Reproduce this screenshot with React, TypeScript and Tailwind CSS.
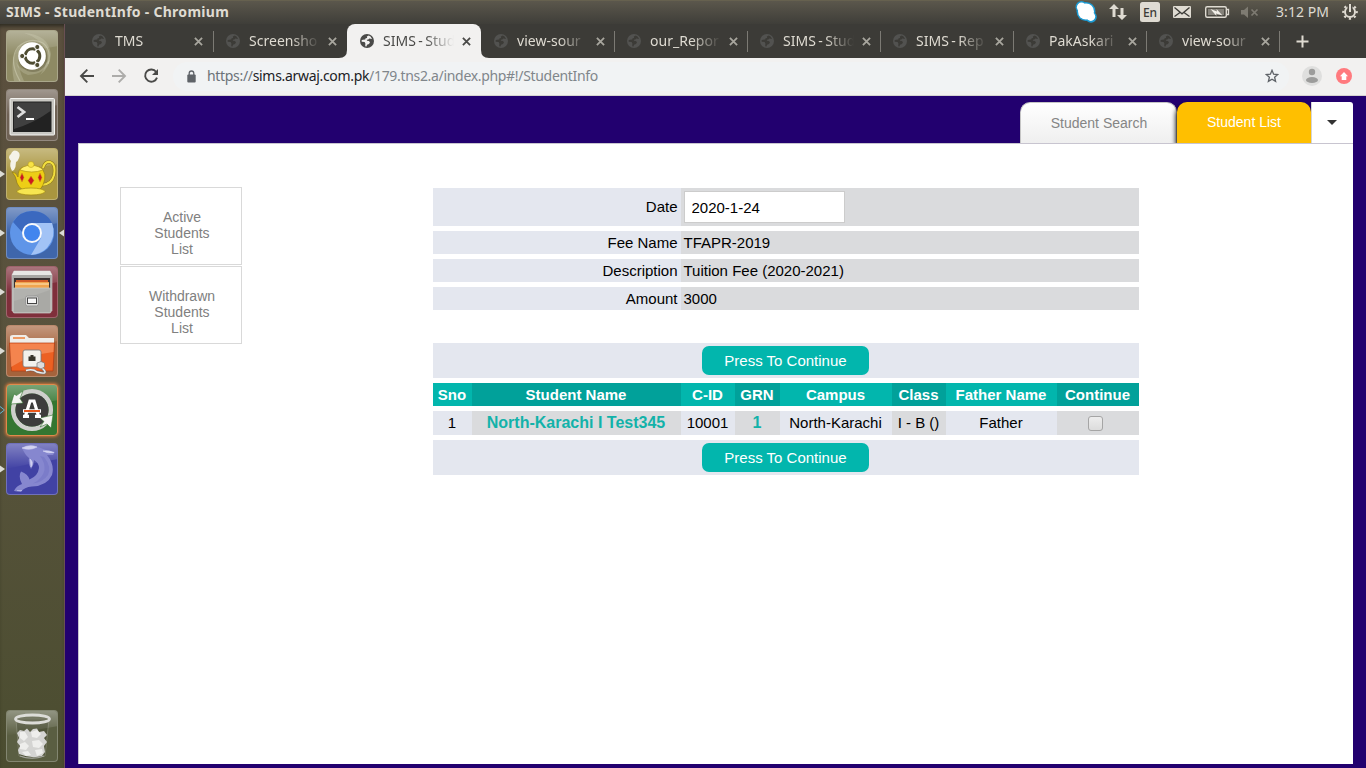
import React from "react";

type TabInfo = { title: string; active?: boolean; width: string; sep?: boolean };

const TABS: TabInfo[] = [
  { title: "TMS", width: "w-[134px]", sep: true },
  { title: "Screensho", width: "w-[134px]" },
  { title: "SIMS - Stud", width: "w-[134px]", active: true },
  { title: "view-sour", width: "w-[133px]", sep: true },
  { title: "our_Repor", width: "w-[133px]", sep: true },
  { title: "SIMS - Stud", width: "w-[133px]", sep: true },
  { title: "SIMS - Rep", width: "w-[133px]", sep: true },
  { title: "PakAskari", width: "w-[133px]", sep: true },
  { title: "view-sour", width: "w-[133px]", sep: true },
];

function Globe({ color, hole }: { color: string; hole: string }) {
  return (
    <svg width="14" height="14" viewBox="0 0 14 14" className="shrink-0">
      <circle cx="7" cy="7" r="7" fill={color} />
      <path
        d="M8.800 1.600 L6.800 2.600 L7.200 3.900 L5.600 4.200 L5.200 5.600 L2.800 5.700 L1.600 6.300 L1.700 7.800 L4.600 8 L5.400 9.400 L5.200 12.200 L6.500 12.500 L7 10.800 L9 9.900 L10 8.200 L8.900 6.900 L7 6.700 L6.800 5.800 L8.400 5.600 L9.200 4.400 L12 5 Q11.200 2.600 8.800 1.600Z"
        fill={hole}
      />
    </svg>
  );
}

function Cross({ color }: { color: string }) {
  return (
    <svg width="9" height="9" viewBox="0 0 9 9" className="shrink-0">
      <path d="M0.900 0.900 L8.100 8.100 M8.100 0.900 L0.900 8.100" stroke={color} strokeWidth="1.800" />
    </svg>
  );
}

function BrowserTab({ tab }: { tab: TabInfo }) {
  return (
    <div className={`relative flex h-[34px] shrink-0 items-center pl-[13px] ${tab.width} ${tab.active ? "rounded-t-[8px] bg-[#f2f1f0]" : ""}`}>
      <Globe color={tab.active ? "#4a4a48" : "#525250"} hole={tab.active ? "#f2f1f0" : "#3c3b37"} />
      <span
        className={`ml-[9px] w-[76px] whitespace-nowrap text-[14px] leading-[20px] tracking-[0.02px] [word-spacing:-1.2px] [mask-image:linear-gradient(to_right,black_42px,transparent_71px)] ${tab.active ? "text-[#4a4a48]" : "text-[#dfdbd2]"}`}
      >
        {tab.title}
      </span>
      <span className="ml-[2.5px] flex">
        <Cross color={tab.active ? "#4a4a48" : "#a8a69e"} />
      </span>
      {tab.sep && <span className="absolute right-[-1px] top-[7px] h-[21px] w-px bg-[#7c7a74]" />}
      {tab.active && (
        <>
          <svg className="absolute bottom-0 left-[-8px]" width="8" height="8">
            <path d="M0 8 Q8 8 8 0 V8Z" fill="#f2f1f0" />
          </svg>
          <svg className="absolute bottom-0 right-[-8px]" width="8" height="8">
            <path d="M8 8 Q0 8 0 0 V8Z" fill="#f2f1f0" />
          </svg>
        </>
      )}
    </div>
  );
}

function TopPanel() {
  return (
    <header className="flex h-[24px] shrink-0 items-start justify-between border-t border-[#66614f] bg-linear-to-b from-[#5b574c] to-[#3f3e39] pl-[6px] text-[#dfdbd2]">
      <h1 className="whitespace-nowrap text-[14px] font-bold leading-[22px] tracking-[0.28px]">SIMS - StudentInfo - Chromium</h1>
      <div className="flex h-full w-[292px] items-center">
        <svg width="292" height="23" viewBox="1074 1 292 23">
          <defs>
            <filter id="skypeGlow" x="-30%" y="-30%" width="160%" height="160%">
              <feGaussianBlur stdDeviation="0.6" />
            </filter>
          </defs>
          <g fill="#1b9ad2" filter="url(#skypeGlow)">
            <circle cx="1081.500" cy="7" r="6" />
            <circle cx="1086" cy="11.500" r="9.500" />
            <circle cx="1091" cy="17" r="5.800" />
          </g>
          <g fill="#ffffff">
            <circle cx="1081.500" cy="7.200" r="4.600" />
            <circle cx="1086" cy="11.500" r="8" />
            <circle cx="1090.800" cy="16.500" r="4.400" />
          </g>
          <path d="M1109 9 L1114 4 L1119 9 H1115.500 V17 H1112.500 V9Z" fill="#dfdbd2" />
          <path d="M1117 15 H1120.500 V8 H1123.500 V15 H1127 L1122 20Z" fill="#dfdbd2" />
          <rect x="1140" y="2" width="20" height="20" rx="2.500" fill="#dfdbd2" />
          <text x="1150" y="17" textAnchor="middle" fontSize="12" fontWeight="500" fill="#3c3b37">En</text>
          <rect x="1173" y="6" width="18" height="12" rx="1" fill="#dfdbd2" />
          <path d="M1174.500 7.500 L1182 13.800 L1189.500 7.500 M1174.500 16.500 L1180 12.500 M1189.500 16.500 L1184 12.500" stroke="#3c3b37" strokeWidth="1.300" fill="none" />
          <rect x="1205.700" y="6.700" width="20.600" height="10.600" rx="1.500" fill="none" stroke="#dfdbd2" strokeWidth="1.400" />
          <rect x="1208" y="9" width="16" height="6" fill="#85827a" />
          <path d="M1227 9.500 H1228.500 V14.500 H1227" fill="none" stroke="#dfdbd2" strokeWidth="1.300" />
          <path d="M1210.500 9 L1217 11.500 L1216.500 9 L1222.500 15.500 L1216 13.500 L1216.500 16Z" fill="#f2efe8" />
          <path d="M1241 10 H1244 L1248 6.500 V18 L1244 14.500 H1241Z" fill="#7e7b72" />
          <path d="M1251.500 9.500 L1257.500 15.500 M1257.500 9.500 L1251.500 15.500" stroke="#7e7b72" strokeWidth="1.700" />
          <text x="1276" y="17" fontSize="14" textLength="53" lengthAdjust="spacing" fill="#dfdbd2">3:12 PM</text>
          <circle cx="1350" cy="12" r="5" fill="none" stroke="#dfdbd2" strokeWidth="2" />
          <circle cx="1350" cy="12" r="6.800" fill="none" stroke="#dfdbd2" strokeWidth="2" strokeDasharray="2.200 3.140" strokeDashoffset="1.100" />
          <rect x="1347.500" y="4" width="5" height="6" fill="#4e4b43" />
          <rect x="1349" y="4" width="2" height="8" fill="#dfdbd2" />
        </svg>
      </div>
    </header>
  );
}

function Tile({ bg, children, arrow, glow }: { bg: string; children: React.ReactNode; arrow?: "left" | "both" | "hollow"; glow?: boolean }) {
  return (
    <div className="flex h-[52px] w-[64px] shrink-0 items-center">
      <svg width="6" height="12" viewBox="0 0 6 12">
        {arrow && (
          <path
            d={arrow === "hollow" ? "M0 2.500 L4.500 6 L0 9.500" : "M0 2.500 L5 6 L0 9.500Z"}
            fill={arrow === "hollow" ? "none" : "#dcdcd6"}
            stroke={arrow === "hollow" ? "#5fb9d8" : "none"}
          />
        )}
      </svg>
      <div className={`h-[52px] w-[52px] overflow-hidden rounded-[4px] border ${glow ? "border-[#e08a4c] shadow-[0_0_3px_1px_#c8743c]" : "border-white/25"} ${bg}`}>
        <svg width="50" height="50" viewBox="1 1 50 50">
          <defs>
            <linearGradient id="shine" x1="0" y1="0" x2="0" y2="1">
              <stop offset="0" stopColor="#fff" stopOpacity="0.350" />
              <stop offset="1" stopColor="#fff" stopOpacity="0" />
            </linearGradient>
          </defs>
          <path d="M0 0 H52 V16 Q26 20 0 26Z" fill="url(#shine)" />
          {children}
        </svg>
      </div>
      <svg width="6" height="12" viewBox="0 0 6 12">
        {arrow === "both" && <path d="M6 2.500 L1 6 L6 9.500Z" fill="#dcdcd6" />}
      </svg>
    </div>
  );
}

function Launcher() {
  return (
    <aside className="flex w-[65px] shrink-0 flex-col justify-between border-r border-[#6a5054] bg-linear-to-b from-[#5b4f3e] via-[#58533c] to-[#4b4d30] pb-[6px] pt-[6px] shadow-[inset_0_4px_4px_-2px_#2a281f]">
      <div className="flex flex-col gap-[7px]">
        <Tile bg="bg-[#8e8a64]">
          <path d="M14 51 Q2 30 12 17 Q24 6 37 13 Q46 20 42 34" stroke="#d3d1b8" strokeOpacity="0.500" strokeWidth="1.200" fill="none" />
          <path d="M8 51 Q2 24 18 12 Q6 26 18 51Z M18 3 Q42 4 45 24 Q44 38 34 45 Q44 32 40 20 Q34 8 18 3Z" fill="#d8d7c0" fillOpacity="0.280" />
          <path d="M44 30 Q40 44 22 45 Q12 42 10 32 Q18 48 44 30Z" fill="#d8d7c0" fillOpacity="0.250" />
          <circle cx="27" cy="27.500" r="14.500" fill="#5f5b3d" fillOpacity="0.450" />
          <circle cx="26" cy="26" r="13.800" fill="#fff" />
          <circle cx="26.500" cy="26" r="7.300" fill="none" stroke="#4e4c32" strokeWidth="3" strokeDasharray="13.800 1.490" strokeDashoffset="6.900" />
          <g fill="#4e4c32" stroke="#fff" strokeWidth="1">
            <circle cx="16.200" cy="26" r="2.600" />
            <circle cx="31.300" cy="17" r="2.600" />
            <circle cx="31.300" cy="35" r="2.600" />
          </g>
        </Tile>
        <Tile bg="bg-[#6f6255]">
          <rect x="4" y="9.500" width="44.500" height="36.500" rx="1" fill="#c9c8c3" stroke="#f3f3f0" />
          <rect x="7" y="12.500" width="38.500" height="30.500" fill="#222" />
          <path d="M8 13.500 H44.500 V22 Q28 34 8 40Z" fill="#555" fillOpacity="0.600" />
          <path d="M11.500 18 L18 23 L11.500 28" fill="none" stroke="#ddd" strokeWidth="2.800" />
          <path d="M20 30 H28" stroke="#fff" strokeWidth="2" />
        </Tile>
        <Tile bg="bg-[#aa963f]" arrow="left">
          <path d="M37 20 Q39 13 44 14 Q50 16 48 27 Q46 36 36 37" fill="none" stroke="#8d7614" strokeWidth="3.200" />
          <path d="M37 20 Q39 13 44 14 Q50 16 48 27 Q46 36 36 37" fill="none" stroke="#f2df40" strokeWidth="2" />
          <path d="M6 24 Q10 24 12 29 Q12 21 17 19 H34 Q42 25 37 37 Q34 44 25 44 Q14 43 11 35 Q10 28 6 24Z" fill="#edce16" stroke="#8d7614" strokeWidth="0.600" />
          <path d="M14 22 Q16 18 25 17 Q34 18 37 22 Q26 26 14 22Z" fill="#fff06c" stroke="#b39716" strokeWidth="0.700" />
          <circle cx="25" cy="16.500" r="3" fill="#f8e344" stroke="#b39716" strokeWidth="0.500" />
          <path d="M6 23 Q3 17 5 13 Q1 9 5 6 Q7 1 11 3 Q15 5 13 10 Q12 13 10 14 Q10 19 8 22Z" fill="#f4f2e8" />
          <ellipse cx="25" cy="43.500" rx="14" ry="3.500" fill="#f7e550" stroke="#a48a12" strokeWidth="0.700" />
          <path d="M16 25 L18 29.500 L16 34 L14 29.500Z M25 28 L28 32.500 L25 37 L22 32.500Z M34 25 L36 29.500 L34 34 L32 29.500Z" fill="#ce1820" stroke="#c99a1a" strokeWidth="0.500" />
        </Tile>
        <Tile bg="bg-[#3f66ab]" arrow="both">
          <circle cx="26" cy="26" r="22" fill="#5f95e8" />
          <path d="M7 15 Q14 4 26 4 Q40 4 46 16 H26 Q18 17 16 25Z" fill="#3b69bf" />
          <path d="M26 16 H46 Q51 29 41 41 Q35 47 25 48 L35 31 Q38 22 26 16Z" fill="#a2c3f6" />
          <circle cx="26" cy="26" r="10" fill="#f8f9fb" />
          <circle cx="26" cy="26" r="8" fill="#4285ee" />
        </Tile>
        <Tile bg="bg-[#7f2f3b]" arrow="left">
          <path d="M8 5 H44 L46 9 V45 H6 V9Z" fill="#a7a7a3" stroke="#ccc" strokeWidth="0.600" />
          <path d="M8 5 H44 L46 9 H6Z" fill="#e7e7e4" />
          <rect x="8" y="12" width="36" height="15" fill="#3a3231" />
          <path d="M10 14 H42 V25 H10Z" fill="#d25c28" />
          <path d="M9 16 H43 V27 H9Z" fill="#f0a44e" />
          <path d="M9 18 H43" stroke="#ffe9bc" />
          <rect x="7" y="22" width="38" height="25" rx="1.500" fill="#b2b2ae" stroke="#cfcfcb" strokeWidth="0.700" />
          <path d="M8 35 Q26 31 44 24 V46 H8Z" fill="#8e8e8a" fillOpacity="0.250" />
          <rect x="19.500" y="30" width="13" height="10" rx="2" fill="#d9d9d6" stroke="#999" />
          <rect x="21.500" y="32" width="9" height="5.500" fill="#f7f7f7" stroke="#444" />
        </Tile>
        <Tile bg="bg-[#a5633c]" arrow="left">
          <path d="M4 12 Q4 10 7 10 H20 L23 13 H48 V24 H4Z" fill="#f0eeea" />
          <path d="M7 13 H19" stroke="#ee9b65" strokeWidth="1.800" />
          <path d="M3.500 18 H48.500 L47 46 H5.500Z" fill="#ec6022" stroke="#b13b12" strokeWidth="0.700" />
          <path d="M4 18.500 H48 L47.500 27 Q25 29 5 42Z" fill="#fca879" fillOpacity="0.500" />
          <rect x="17" y="25" width="18" height="17" rx="2" fill="#f2f1ed" stroke="#777" strokeWidth="0.800" />
          <path d="M22.500 36 V31.500 H24.500 V30 H27.500 V31.500 H29.500 V36Z" fill="#37352d" />
          <path d="M20 45.500 Q27 43.500 31 47 Q42 50 38 45 L35 42" stroke="#777" strokeWidth="2.600" fill="none" />
          <path d="M20 45.500 Q27 43.500 31 47 Q42 50 38 45 L35 42" stroke="#eee" strokeWidth="1.400" fill="none" />
          <path d="M31 38 L35 36.500 L38.500 38 V42 L35 44 L31 42Z" fill="#ddd" stroke="#777" strokeWidth="0.700" />
        </Tile>
        <Tile bg="bg-[#347631]" arrow="hollow" glow>
          <circle cx="26" cy="26" r="18.800" fill="none" stroke="#cfcfcc" strokeWidth="4.500" />
          <circle cx="26" cy="26" r="16.500" fill="#3d3d3c" />
          <path d="M5 20 L8 10 L10.500 11.500 L17 7 L14 14.500 L17 19Z M47 31 L45 44 L41 40 L34 43 L38 37.500 L34 34Z" fill="#f4f4f2" stroke="#347631" strokeWidth="0.600" />
          <path d="M17 32.300 H23 M29 32.300 H35 M19.500 32 L24 17 H28 L32.500 32" fill="none" stroke="#fff" strokeWidth="3.200" />
          <path d="M17 27 H35" stroke="#fff" strokeWidth="3.600" />
          <path d="M18 27 H34" stroke="#e9581b" strokeWidth="2" />
        </Tile>
        <Tile bg="bg-[#4142a4]" arrow="left">
          <path d="M16 5 Q24 0 32 4 L40 7 L49 9 L47 12 L41 12 Q49 22 46 32 Q41 43 26 43.500 Q18 44 15 49 L8 48 Q10 43 16 41 Q12 34 15 28.500 Q22 31 23.500 36.500 Q32 33 33 25 Q33 20 28 17 Q28 22 25 26 Q22 21 23 15 Q19 12 16 5Z" fill="#8687cf" />
          <path d="M16 5 Q24 1 31 4 Q24 8 16 5 M37 8 Q43 7 48 9.500 Q42 11 37 8 M24 16 Q28 19 25 24Z M11 47.500 H16" fill="#d2d2f1" stroke="#d2d2f1" strokeWidth="0.600" />
          <path d="M38 14 Q46 24 42 32 Q37 39 27 40.500 Q37 35 38.500 27 Q39 19 34 13Z" fill="#7b7cc9" />
        </Tile>
      </div>
      <Tile bg="bg-[#5a5e42]">
        <path d="M10 9 L13 46 Q26 50 39 46 L43 9Z" fill="#30321f" fillOpacity="0.250" stroke="#c6c8bd" strokeOpacity="0.300" />
        <path d="M13 44 L12 40 L14 36 L11 32 L13 28 L11 23 L14 20 L18 21 L21 18.500 L24 22 L27 19 L31 18.500 L33 22 L38 21 L41 25 L38 28 L41 32 L38 36 L39 42 L36 46 Q25 49 13 44Z" fill="#d4d4d2" />
        <path d="M14 22 L19 22 L22 27 L18 31 L14 28Z M25 22 L31 20 L35 24 L31 28 L26 27Z M14 34 L19 32 L23 36 L20 40 L14 39Z M26 31 L33 30 L37 34 L33 38 L27 37Z M16 42 L22 41 L25 45 L20 46Z M29 40 L36 39 L37 43 L31 46Z" fill="#eeeeec" />
        <ellipse cx="26.500" cy="9" rx="17" ry="4" fill="#6d705d" fillOpacity="0.700" stroke="#dcdcd8" strokeWidth="2.800" />
        <path d="M14 46 Q26 50.500 38 46" fill="none" stroke="#a5a69f" strokeWidth="1.200" />
      </Tile>
    </aside>
  );
}

function Toolbar() {
  return (
    <div className="flex h-[38px] shrink-0 items-center border-b border-[#d5d3d0] bg-[#f2f1f0] pb-px pl-[14px]">
      <svg width="82" height="20" viewBox="79 66 82 20" fill="none" strokeWidth="1.900">
        <path d="M94 76 H81 M87.300 69.700 L81 76 L87.300 82.300" stroke="#4a4a48" />
        <path d="M112 76 H125 M118.700 69.700 L125 76 L118.700 82.300" stroke="#adacaa" />
        <path d="M156.200 72 A6.100 6.100 0 1 0 157 77.600" stroke="#4a4a48" />
        <path d="M158 69 V75 H152Z" fill="#4a4a48" />
      </svg>
      <div className="ml-[12px] flex h-[29px] w-[1116px] items-center rounded-full bg-[#f1f3f4] pl-[14px]">
        <svg width="9" height="13" viewBox="0 0 9 13">
          <rect x="0.300" y="4.500" width="8.400" height="8" rx="1" fill="#5f6368" />
          <path d="M2.200 5 V3.300 A2.300 2.300 0 0 1 6.800 3.300 V5" stroke="#5f6368" strokeWidth="1.300" fill="none" />
        </svg>
        <span className="ml-[11px] whitespace-nowrap text-[14px] leading-[20px] tracking-[-0.32px] text-[#80868b]">
          <span className="text-[#6c7278]">https://</span>
          <span className="text-[#202124]">sims.arwaj.com.pk</span>/179.tns2.a/index.php#!/StudentInfo
        </span>
        <svg className="ml-auto mr-[10px]" width="14" height="14" viewBox="0 0 14 14">
          <path d="M7 1.300 L8.600 5.200 L12.800 5.500 L9.600 8.200 L10.600 12.400 L7 10.200 L3.400 12.400 L4.400 8.200 L1.200 5.500 L5.400 5.200Z" fill="none" stroke="#5f6368" strokeWidth="1.300" />
        </svg>
      </div>
      <svg className="ml-[13px]" width="20" height="20" viewBox="0 0 20 20">
        <circle cx="10" cy="10" r="10" fill="#dfdfde" />
        <circle cx="10" cy="6" r="3.200" fill="#9c9c9b" />
        <ellipse cx="10" cy="14" rx="6" ry="3" fill="#9c9c9b" />
      </svg>
      <svg className="ml-[14px]" width="16" height="16" viewBox="0 0 16 16">
        <circle cx="8" cy="8" r="8" fill="#ff7a7e" />
        <path d="M8 4 L12 8.300 H10.300 V12 H5.700 V8.300 H4Z" fill="#fff" />
      </svg>
    </div>
  );
}

function FormRow({ label, children, tall }: { label: string; children: React.ReactNode; tall?: boolean }) {
  return (
    <div className={`grid grid-cols-[248px_458px] ${tall ? "h-[38px]" : "h-[23px] leading-[22px]"}`}>
      <div className={`bg-[#e4e7ef] pr-[3.5px] text-right ${tall ? "leading-[38px]" : "pt-px"}`}>{label}</div>
      <div className={`bg-[#dadbdd] pl-[2.5px] ${tall ? "pt-[3px]" : "pt-px"}`}>{children}</div>
    </div>
  );
}

function ContinueBar() {
  return (
    <div className="flex h-[35px] items-center justify-center bg-[#e4e7ef]">
      <button className="mr-[1px] h-[29px] w-[167px] rounded-[7px] bg-[#02b6ad] text-[15px] leading-[29px] text-white">Press To Continue</button>
    </div>
  );
}

const COLS = "grid grid-cols-[39px_209px_54px_45px_112px_54px_111px_82px] text-center";
const HEADERS = ["Sno", "Student Name", "C-ID", "GRN", "Campus", "Class", "Father Name", "Continue"];

function StudentTable() {
  const cells: React.ReactNode[] = [
    "1",
    <span className="text-[16px] font-bold text-[#12b2a9]">North-Karachi I Test345</span>,
    "10001",
    <span className="text-[16px] font-bold text-[#12b2a9]">1</span>,
    "North-Karachi",
    "I - B ()",
    "Father",
    <span className="mr-[4px] h-[15px] w-[15px] rounded-[3px] border border-[#a5a5a5] bg-linear-to-b from-[#ededed] to-[#dcdcdc]" />,
  ];
  return (
    <div className="mt-[33px] flex flex-col gap-[5px]">
      <ContinueBar />
      <div className={`${COLS} h-[23px] font-bold leading-[23px] text-white`}>
        {HEADERS.map((h, i) => (
          <div key={h} className={`pr-px ${i % 2 ? "bg-[#01a19a]" : "bg-[#02b6ad]"}`}>{h}</div>
        ))}
      </div>
      <div className={`${COLS} h-[24px] leading-[24px]`}>
        {cells.map((c, i) => (
          <div key={i} className={`flex items-center justify-center pr-px ${i % 2 ? "bg-[#dadbdd]" : "bg-[#e4e7ef]"}`}>{c}</div>
        ))}
      </div>
      <ContinueBar />
    </div>
  );
}

function SideLink({ children }: { children: React.ReactNode }) {
  return (
    <a className="block h-[78px] w-[122px] border border-[#d9d9d9] pl-[27px] pr-[25px] pt-[21px] text-center text-[14px] leading-[16px] text-[#808080]">
      {children}
    </a>
  );
}

function Page() {
  return (
    <main className="flex min-h-0 grow flex-col bg-[#22006f] pb-[4px] pl-[13px] pr-[13px] font-['Liberation_Sans',sans-serif] text-black">
      <nav className="flex h-[47px] shrink-0 items-end justify-end text-[14px]">
        <a className="h-[41px] w-[157px] rounded-t-[10px] border border-b-0 border-[#c5c5c5] bg-linear-to-b from-white to-[#efefef] pl-px text-center leading-[40px] text-[#858585]">Student Search</a>
        <a className="h-[41px] w-[134px] rounded-t-[10px] bg-[#ffbf00] text-center leading-[40px] text-white shadow-[-1px_3px_5px_#000]">Student List</a>
        <a className="flex h-[41px] w-[42px] items-center justify-center rounded-tr-[3px] border-l border-[#d5d5d5] bg-white">
          <svg className="mr-px" width="10" height="5"><path d="M0 0 H10 L5 5Z" fill="#333" /></svg>
        </a>
      </nav>
      <section className="flex grow border-l border-t border-[#c8c5d0] bg-white pl-[41px] pt-[43px]">
        <div className="flex w-[122px] shrink-0 flex-col gap-[1px]">
          <SideLink>Active Students List</SideLink>
          <SideLink>Withdrawn Students List</SideLink>
        </div>
        <div className="ml-[191px] mt-[1px] w-[706px] text-[15px]">
          <div className="flex flex-col gap-[5px]">
            <FormRow label="Date" tall>
              <input readOnly defaultValue="2020-1-24" className="ml-[0.5px] block h-[32px] w-[161px] border border-[#ccc] bg-white pl-[6.5px] text-[15px] outline-none" />
            </FormRow>
            <FormRow label="Fee Name">TFAPR-2019</FormRow>
            <FormRow label="Description">Tuition Fee (2020-2021)</FormRow>
            <FormRow label="Amount">3000</FormRow>
          </div>
          <StudentTable />
        </div>
      </section>
    </main>
  );
}

export default function App() {
  return (
    <div className="flex h-[768px] w-[1366px] flex-col overflow-hidden font-['Noto_Sans','Open_Sans',sans-serif]">
      <TopPanel />
      <div className="flex min-h-0 grow">
        <Launcher />
        <div className="flex min-w-0 grow flex-col">
          <div className="flex h-[34px] shrink-0 items-center bg-[#3c3b37] pl-[14px]">
            {TABS.map((t, i) => (
              <BrowserTab key={i} tab={t} />
            ))}
            <svg className="ml-[17px]" width="13" height="13" viewBox="0 0 13 13">
              <path d="M6.500 0.500 V12.500 M0.500 6.500 H12.500" stroke="#dfdbd2" strokeWidth="2" />
            </svg>
          </div>
          <Toolbar />
          <Page />
        </div>
      </div>
    </div>
  );
}
